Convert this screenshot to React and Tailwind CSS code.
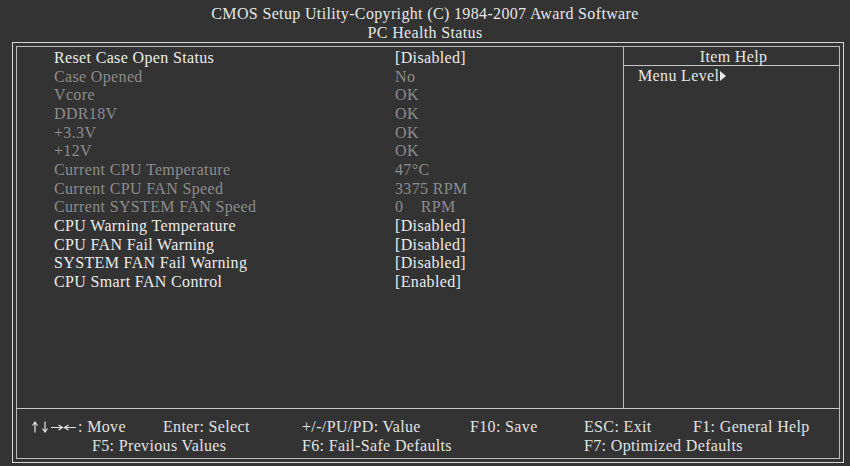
import React from 'react'

const rows = [
    { label: "Reset Case Open Status", value: "[Disabled]", on: true },
    { label: "Case Opened", value: "No" },
    { label: "Vcore", value: "OK" },
    { label: "DDR18V", value: "OK" },
    { label: "+3.3V", value: "OK" },
    { label: "+12V", value: "OK" },
    { label: "Current CPU Temperature", value: "47°C" },
    { label: "Current CPU FAN Speed", value: "3375 RPM" },
    { label: "Current SYSTEM FAN Speed", value: "0    RPM" },
    { label: "CPU Warning Temperature", value: "[Disabled]", on: true },
    { label: "CPU FAN Fail Warning", value: "[Disabled]", on: true },
    { label: "SYSTEM FAN Fail Warning", value: "[Disabled]", on: true },
    { label: "CPU Smart FAN Control", value: "[Enabled]", on: true },
];

// the four cursor arrows of the key legend
function Arrows() {
    return (
        <svg width="45" height="12" viewBox="0 0 45 12" className="inline-block mr-[1px]" fill="none" stroke="#e2e2e2" strokeWidth="1.2">
            <path d="M3 11.5V1.5M0.5 4.5L3 1L5.5 4.5" />
            <path d="M13 0.5V10.5M10.5 7.5L13 11L15.5 7.5" />
            <path d="M19 6.5H30M26.5 4L30.5 6.5L26.5 9" />
            <path d="M44 6.5H33M36.5 4L32.5 6.5L36.5 9" />
        </svg>
    )
}

function App() {
    return (
        <div className="w-[850px] h-[466px] bg-[#333333] text-[#e6e6e6] text-[16px] tracking-[0.35px] font-['Liberation_Serif','Times_New_Roman',serif] flex flex-col overflow-hidden">
            {/* title */}
            <div className="h-[42px] flex flex-col items-center pt-[4px] leading-[19px]">
                <div>CMOS Setup Utility-Copyright (C) 1984-2007 Award Software</div>
                <div>PC Health Status</div>
            </div>

            {/* double frame */}
            <div className="ml-[12px] w-[832px] h-[421px] border border-[#d8d8d8] p-[3px]">
                <div className="h-full border border-[#bdbdbd] flex flex-col">
                    <div className="flex flex-1 border-b border-[#c8c8c8]">
                        <div className="w-[606px] pl-[37px] pt-[2px] leading-[18.67px]">
                            {rows.map((r) => (
                                <div key={r.label} className={`flex h-[18.67px] ${r.on ? 'text-[#ececec]' : 'text-[#8c8c8c]'}`}>
                                    <span className="w-[341px] shrink-0">{r.label}</span>
                                    <span className="whitespace-pre">{r.value}</span>
                                </div>
                            ))}
                        </div>
                        <div className="flex-1 border-l border-[#bdbdbd] flex flex-col">
                            <div className="h-[19px] border-b border-[#c8c8c8] text-center leading-[20px] pl-[4px]">Item Help</div>
                            <div className="pl-[14px] leading-[19px] flex items-center">
                                Menu Level
                                <svg width="6" height="10" viewBox="0 0 6 10" className="ml-[1px]">
                                    <path d="M0 0 L6 5 L0 10 Z" fill="#ececec" />
                                </svg>
                            </div>
                        </div>
                    </div>
                    {/* footer keys */}
                    <div className="h-[49px] pt-[8px] leading-[19px] text-[#e2e2e2]">
                        <div className="flex whitespace-nowrap">
                            <span className="w-[146px] shrink-0 pl-[15px] flex items-center">
                                <Arrows />: Move
                            </span>
                            <span className="w-[139px] shrink-0">Enter: Select</span>
                            <span className="w-[168px] shrink-0">+/-/PU/PD: Value</span>
                            <span className="w-[114px] shrink-0">F10: Save</span>
                            <span className="w-[109px] shrink-0">ESC: Exit</span>
                            <span>F1: General Help</span>
                        </div>
                        <div className="flex whitespace-nowrap">
                            <span className="w-[285px] shrink-0 pl-[75px]">F5: Previous Values</span>
                            <span className="w-[282px] shrink-0">F6: Fail-Safe Defaults</span>
                            <span>F7: Optimized Defaults</span>
                        </div>
                    </div>
                </div>
            </div>
        </div>
    )
}

export default App;
